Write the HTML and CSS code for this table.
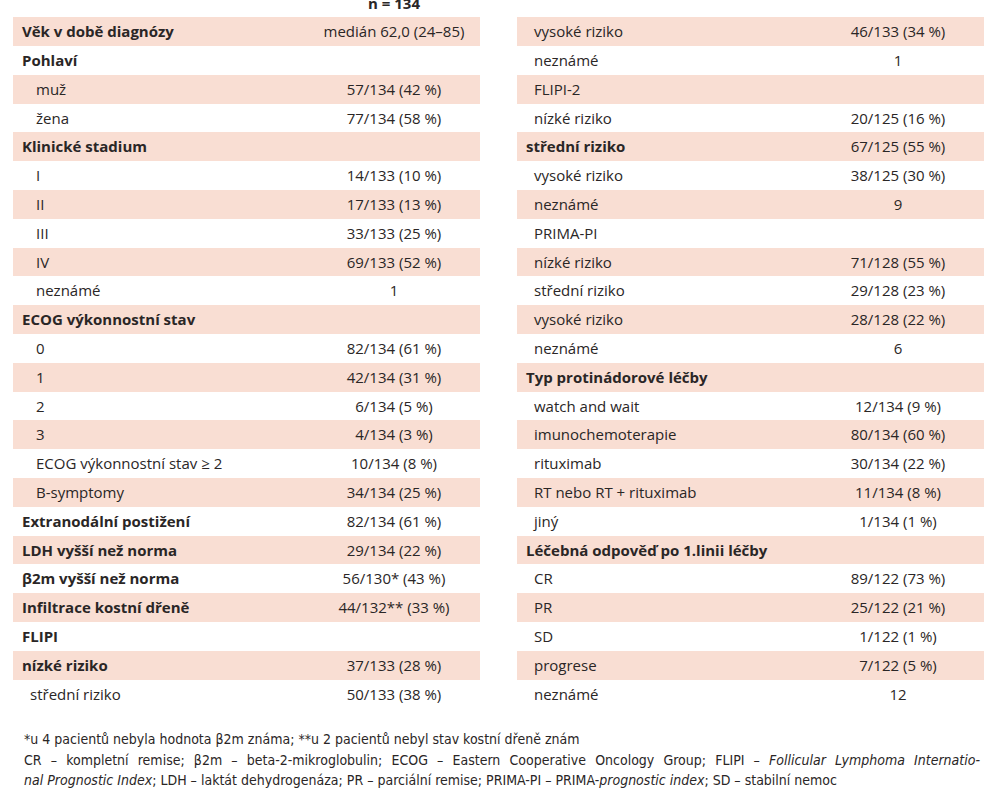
FILE: index.html
```html
<!DOCTYPE html>
<html lang="cs">
  <head>
    <meta charset="UTF-8" />
    <meta name="viewport" content="width=device-width, initial-scale=1.0" />
    <title>Charakteristika souboru pacientů</title>
    <link rel="stylesheet" href="styles.css">
  </head>
  <body>
    <div class="tables">
      <!-- left half -->
      <div class="col">
        <div class="head"><span class="head-val">n = 134</span></div>
        <div class="row shade"><span class="label bold">Věk v době diagnózy</span><span class="val">medián 62,0 (24–85)</span></div>
        <div class="row"><span class="label bold">Pohlaví</span><span class="val"></span></div>
        <div class="row shade"><span class="label sub">muž</span><span class="val">57/134 (42 %)</span></div>
        <div class="row"><span class="label sub">žena</span><span class="val">77/134 (58 %)</span></div>
        <div class="row shade"><span class="label bold">Klinické stadium</span><span class="val"></span></div>
        <div class="row"><span class="label sub">I</span><span class="val">14/133 (10 %)</span></div>
        <div class="row shade"><span class="label sub">II</span><span class="val">17/133 (13 %)</span></div>
        <div class="row"><span class="label sub">III</span><span class="val">33/133 (25 %)</span></div>
        <div class="row shade"><span class="label sub">IV</span><span class="val">69/133 (52 %)</span></div>
        <div class="row"><span class="label sub">neznámé</span><span class="val">1</span></div>
        <div class="row shade"><span class="label bold">ECOG výkonnostní stav</span><span class="val"></span></div>
        <div class="row"><span class="label sub">0</span><span class="val">82/134 (61 %)</span></div>
        <div class="row shade"><span class="label sub">1</span><span class="val">42/134 (31 %)</span></div>
        <div class="row"><span class="label sub">2</span><span class="val">6/134 (5 %)</span></div>
        <div class="row shade"><span class="label sub">3</span><span class="val">4/134 (3 %)</span></div>
        <div class="row"><span class="label sub">ECOG výkonnostní stav ≥ 2</span><span class="val">10/134 (8 %)</span></div>
        <div class="row shade"><span class="label sub">B-symptomy</span><span class="val">34/134 (25 %)</span></div>
        <div class="row"><span class="label bold">Extranodální postižení</span><span class="val">82/134 (61 %)</span></div>
        <div class="row shade"><span class="label bold">LDH vyšší než norma</span><span class="val">29/134 (22 %)</span></div>
        <div class="row"><span class="label bold">β2m vyšší než norma</span><span class="val">56/130* (43 %)</span></div>
        <div class="row shade"><span class="label bold">Infiltrace kostní dřeně</span><span class="val">44/132** (33 %)</span></div>
        <div class="row"><span class="label bold">FLIPI</span><span class="val"></span></div>
        <div class="row shade"><span class="label bold">nízké riziko</span><span class="val">37/133 (28 %)</span></div>
        <div class="row"><span class="label item">střední riziko</span><span class="val">50/133 (38 %)</span></div>
      </div>

      <!-- right half -->
      <div class="col">
        <div class="head"></div>
        <div class="row shade"><span class="label item">vysoké riziko</span><span class="val">46/133 (34 %)</span></div>
        <div class="row"><span class="label item">neznámé</span><span class="val">1</span></div>
        <div class="row shade"><span class="label item">FLIPI-2</span><span class="val"></span></div>
        <div class="row"><span class="label item">nízké riziko</span><span class="val">20/125 (16 %)</span></div>
        <div class="row shade"><span class="label bold">střední riziko</span><span class="val">67/125 (55 %)</span></div>
        <div class="row"><span class="label item">vysoké riziko</span><span class="val">38/125 (30 %)</span></div>
        <div class="row shade"><span class="label item">neznámé</span><span class="val">9</span></div>
        <div class="row"><span class="label item">PRIMA-PI</span><span class="val"></span></div>
        <div class="row shade"><span class="label item">nízké riziko</span><span class="val">71/128 (55 %)</span></div>
        <div class="row"><span class="label item">střední riziko</span><span class="val">29/128 (23 %)</span></div>
        <div class="row shade"><span class="label item">vysoké riziko</span><span class="val">28/128 (22 %)</span></div>
        <div class="row"><span class="label item">neznámé</span><span class="val">6</span></div>
        <div class="row shade"><span class="label bold">Typ protinádorové léčby</span><span class="val"></span></div>
        <div class="row"><span class="label item">watch and wait</span><span class="val">12/134 (9 %)</span></div>
        <div class="row shade"><span class="label item">imunochemoterapie</span><span class="val">80/134 (60 %)</span></div>
        <div class="row"><span class="label item">rituximab</span><span class="val">30/134 (22 %)</span></div>
        <div class="row shade"><span class="label item">RT nebo RT + rituximab</span><span class="val">11/134 (8 %)</span></div>
        <div class="row"><span class="label item">jiný</span><span class="val">1/134 (1 %)</span></div>
        <div class="row shade"><span class="label bold">Léčebná odpověď po 1.linii léčby</span><span class="val"></span></div>
        <div class="row"><span class="label item">CR</span><span class="val">89/122 (73 %)</span></div>
        <div class="row shade"><span class="label item">PR</span><span class="val">25/122 (21 %)</span></div>
        <div class="row"><span class="label item">SD</span><span class="val">1/122 (1 %)</span></div>
        <div class="row shade"><span class="label item">progrese</span><span class="val">7/122 (5 %)</span></div>
        <div class="row"><span class="label item">neznámé</span><span class="val">12</span></div>
      </div>
    </div>

    <div class="notes">
      <p>*u 4 pacientů nebyla hodnota β2m známa; **u 2 pacientů nebyl stav kostní dřeně znám</p>
      <p class="justify">CR – kompletní remise; β2m – beta-2-mikroglobulin; ECOG – Eastern Cooperative Oncology Group; FLIPI – <i>Follicular Lymphoma Internatio-</i></p>
      <p><i>nal Prognostic Index</i>; LDH – laktát dehydrogenáza; PR – parciální remise; PRIMA-PI – PRIMA-<i>prognostic index</i>; SD – stabilní nemoc</p>
    </div>
  </body>
</html>
```

FILE: styles.css
```css
:root {
  --shade: #f9ded3;
  --text: #2a2626;
  --row-h: 28.8px;
}

body {
  margin: 0;
  background: #fff;
  color: var(--text);
  font-family: "Open Sans", "Noto Sans", sans-serif;
  font-size: 15px;
}

.tables {
  display: grid;
  grid-template-columns: 467px 467px;
  column-gap: 37px;
  padding-left: 13px;
}

.head {
  height: 17.3px;
  overflow: hidden;
  display: grid;
  grid-template-columns: 1fr 172px;
}

.head-val {
  grid-column: 2;
  text-align: center;
  font-weight: 700;
  line-height: 14px;
  margin-top: -4px;
}

.row {
  display: grid;
  grid-template-columns: 1fr 172px;
  height: var(--row-h);
  line-height: var(--row-h);
  white-space: nowrap;
}

.row.shade {
  background: var(--shade);
}

.label {
  padding-left: 9px;
}

.label.bold {
  font-weight: 700;
}

.label.sub {
  padding-left: 23px;
}

.label.item {
  padding-left: 17px;
}

.val {
  text-align: center;
}

.notes {
  width: 956px;
  margin-top: 21px;
  padding-left: 24px;
  font-family: "DejaVu Sans Condensed", "DejaVu Sans", sans-serif;
  font-stretch: condensed;
  font-size: 14px;
  line-height: 20.5px;
  white-space: nowrap;
}

.notes p {
  margin: 0;
}

.notes .justify {
  white-space: normal;
  text-align: justify;
  text-align-last: justify;
}
```
